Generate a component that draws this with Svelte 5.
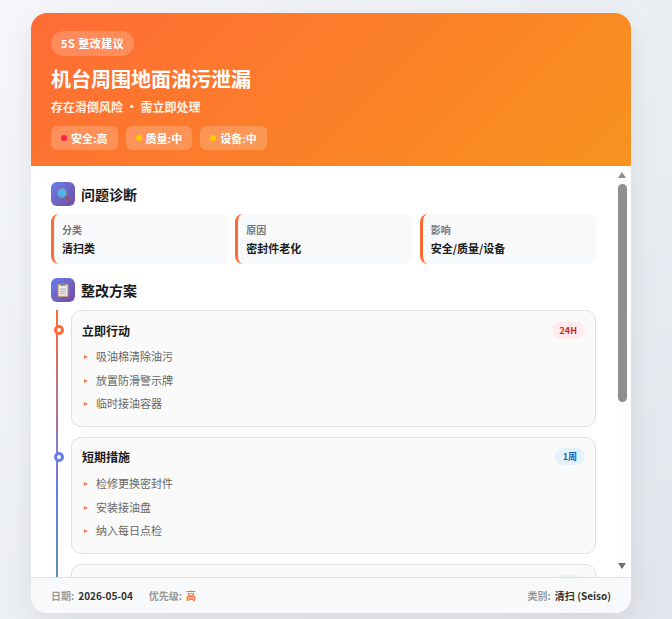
<script lang="ts">
  const diagnosis = [
    { label: '分类', value: '清扫类' },
    { label: '原因', value: '密封件老化' },
    { label: '影响', value: '安全/质量/设备' }
  ];

  const steps = [
    { title: '立即行动', time: '24H', tone: 'red', items: ['吸油棉清除油污', '放置防滑警示牌', '临时接油容器'] },
    { title: '短期措施', time: '1周', tone: 'blue', items: ['检修更换密封件', '安装接油盘', '纳入每日点检'] },
    { title: '长期改善', time: '1月', tone: 'green', items: ['制定预防保养计划', '更新点检标准', '开展员工培训'] }
  ];

  const tags = [
    { label: '安全:高', color: '#ff1f4b' },
    { label: '质量:中', color: '#ffcc00' },
    { label: '设备:中', color: '#ffcc00' }
  ];
</script>

<div class="page">
  <div class="card">
    <header class="header">
      <span class="badge">5S 整改建议</span>
      <h1>机台周围地面油污泄漏</h1>
      <p class="subtitle">存在滑倒风险 · 需立即处理</p>
      <div class="tags">
        {#each tags as t}
          <span class="tag"><i class="dot" style="background: {t.color}"></i>{t.label}</span>
        {/each}
      </div>
    </header>

    <div class="body">
      <div class="content">
        <section class="section">
          <h2 class="section-title">
            <span class="icon">
              <svg width="16" height="16" viewBox="0 0 16 16">
                <path d="M10.5 10.5 L14 14" stroke="#8a5a5a" stroke-width="2.2" stroke-linecap="round" />
                <circle cx="7" cy="7" r="4.6" fill="#4fb4ee" stroke="#7d8aa8" stroke-width="1.1" />
              </svg>
            </span>
            问题诊断
          </h2>
          <div class="diag-grid">
            {#each diagnosis as d}
              <div class="diag-item">
                <div class="diag-label">{d.label}</div>
                <div class="diag-value">{d.value}</div>
              </div>
            {/each}
          </div>
        </section>

        <section class="section">
          <h2 class="section-title">
            <span class="icon">
              <svg width="16" height="16" viewBox="0 0 16 16">
                <rect x="2.5" y="2" width="11" height="13" rx="1" fill="#c49a7c" />
                <rect x="3.7" y="3.2" width="8.6" height="10.6" fill="#eceaea" />
                <rect x="5.5" y="1.5" width="5" height="2.6" rx="0.5" fill="#8d8f9e" />
                <path d="M5 7h6M5 9.2h6M5 11.4h6" stroke="#a9a7b5" stroke-width="0.9" />
              </svg>
            </span>
            整改方案
          </h2>
          <div class="timeline">
            {#each steps as s}
              <div class="step {s.tone}">
                <span class="marker"></span>
                <div class="step-head">
                  <span class="step-title">{s.title}</span>
                  <span class="step-time">{s.time}</span>
                </div>
                <ul>
                  {#each s.items as item}
                    <li>{item}</li>
                  {/each}
                </ul>
              </div>
            {/each}
          </div>
        </section>
      </div>

      <div class="scrollbar">
        <span class="arrow up"></span>
        <span class="thumb"></span>
        <span class="arrow down"></span>
      </div>
    </div>

    <footer class="footer">
      <div class="foot-left">
        <span class="meta"><em>日期:</em><b>2026-05-04</b></span>
        <span class="meta"><em>优先级:</em><b class="high">高</b></span>
      </div>
      <span class="meta"><em>类别:</em><b>清扫 (Seiso)</b></span>
    </footer>
  </div>
</div>

<style>
  :global(body) {
    margin: 0;
    font-family: "Noto Sans CJK SC", sans-serif;
  }
  .page {
    height: 619px;
    box-sizing: border-box;
    padding: 13px 0 0 31px;
    background: linear-gradient(135deg, #f5f7fa 0%, #e2e6ec 100%);
  }
  .card {
    width: 600px;
    height: 600px;
    display: flex;
    flex-direction: column;
    background: #fff;
    border-radius: 16px;
    overflow: hidden;
    box-shadow: 0 8px 32px rgba(0, 0, 0, 0.08);
  }

  .header {
    flex: none;
    height: 153px;
    box-sizing: border-box;
    padding: 18px 20px 0;
    color: #fff;
    background: linear-gradient(135deg, #ff6b35 0%, #f7931e 100%);
  }
  .badge {
    display: block;
    width: fit-content;
    padding: 0 10px;
    height: 25px;
    line-height: 25px;
    font-size: 11px;
    font-weight: 700;
    letter-spacing: 0.5px;
    border-radius: 13px;
    background: rgba(255, 255, 255, 0.2);
  }
  h1 {
    margin: 9px 0 0;
    font-size: 20px;
    line-height: 28px;
    font-weight: 700;
  }
  .subtitle {
    margin: 5px 0 0;
    font-size: 12px;
    line-height: 18px;
    font-weight: 700;
    opacity: 0.9;
  }
  .tags {
    display: flex;
    gap: 8px;
    margin-top: 10px;
  }
  .tag {
    display: flex;
    align-items: center;
    gap: 4px;
    height: 24px;
    padding: 0 10px;
    font-size: 11px;
    font-weight: 700;
    border-radius: 6px;
    background: rgba(255, 255, 255, 0.2);
  }
  .dot {
    width: 6px;
    height: 6px;
    border-radius: 50%;
  }

  .body {
    position: relative;
    flex: 1;
    min-height: 0;
    overflow: hidden;
  }
  .content {
    padding: 16px 35px 0 20px;
  }
  .scrollbar {
    position: absolute;
    top: 0;
    right: 0;
    bottom: 0;
    width: 15px;
    background: #fdfdfd;
  }
  .thumb {
    position: absolute;
    top: 18px;
    left: 2px;
    width: 9px;
    height: 218px;
    border-radius: 5px;
    background: #8f8f8f;
  }
  .arrow {
    position: absolute;
    left: 2px;
    border-left: 4.5px solid transparent;
    border-right: 4.5px solid transparent;
  }
  .arrow.up {
    top: 6px;
    border-bottom: 6px solid #8f8f8f;
  }
  .arrow.down {
    bottom: 8px;
    border-top: 6px solid #6f6f6f;
  }

  .section {
    margin-bottom: 14px;
  }
  .section-title {
    display: flex;
    align-items: center;
    gap: 6px;
    margin: 0 0 8px;
    font-size: 14px;
    line-height: 24px;
    font-weight: 700;
    color: #1a1a1a;
  }
  .icon {
    width: 24px;
    height: 24px;
    display: flex;
    align-items: center;
    justify-content: center;
    border-radius: 6px;
    background: linear-gradient(135deg, #667eea 0%, #764ba2 100%);
  }

  .diag-grid {
    display: grid;
    grid-template-columns: repeat(3, 1fr);
    gap: 8px;
  }
  .diag-item {
    height: 50px;
    box-sizing: border-box;
    padding: 8px 8px;
    background: #f8f9fa;
    border-left: 3px solid #ff6b35;
    border-radius: 8px;
  }
  .diag-label {
    font-size: 10px;
    line-height: 15px;
    font-weight: 700;
    color: #777;
  }
  .diag-value {
    margin-top: 3px;
    font-size: 11px;
    line-height: 16px;
    font-weight: 700;
    color: #1a1a1a;
  }

  .timeline {
    position: relative;
    padding-left: 20px;
  }
  .timeline::before {
    content: '';
    position: absolute;
    left: 5px;
    top: 0;
    bottom: 0;
    width: 2px;
    background: linear-gradient(180deg, #ff6b35 0%, #667eea 50%, #4caf50 100%);
  }
  .step {
    position: relative;
    box-sizing: border-box;
    height: 116.8px;
    margin-bottom: 10px;
    padding: 10px 10px 8px;
    background: #fafafa;
    border: 1px solid #e0e0e0;
    border-radius: 10px;
  }
  .step:last-child {
    margin-bottom: 0;
  }
  .marker {
    position: absolute;
    left: -18px;
    top: 14px;
    width: 4px;
    height: 4px;
    border: 3px solid #ff6b35;
    border-radius: 50%;
    background: #fff;
  }
  .blue .marker {
    border-color: #667eea;
  }
  .green .marker {
    border-color: #4caf50;
  }
  .step-head {
    display: flex;
    align-items: center;
    justify-content: space-between;
    height: 18px;
    margin-bottom: 6px;
  }
  .step-title {
    font-size: 12px;
    font-weight: 700;
    color: #1a1a1a;
  }
  .step-time {
    padding: 0 8px;
    height: 17px;
    line-height: 17px;
    font-size: 9px;
    font-weight: 700;
    border-radius: 9px;
  }
  .red .step-time {
    color: #c62828;
    background: #ffebee;
  }
  .blue .step-time {
    color: #1565c0;
    background: #e3f2fd;
  }
  .green .step-time {
    color: #2e7d32;
    background: #e8f5e9;
  }
  ul {
    margin: 0;
    padding: 0;
    list-style: none;
  }
  li {
    position: relative;
    padding: 4px 0 4px 14px;
    font-size: 11px;
    line-height: 15.7px;
    color: #666;
  }
  li::before {
    content: '';
    position: absolute;
    left: 2px;
    top: 10px;
    border-left: 4px solid #ff7a45;
    border-top: 2px solid transparent;
    border-bottom: 2px solid transparent;
  }

  .footer {
    flex: none;
    height: 36px;
    box-sizing: border-box;
    padding: 0 20px;
    display: flex;
    align-items: center;
    justify-content: space-between;
    font-size: 10px;
    background: #f8f9fa;
    border-top: 1px solid #e0e0e0;
  }
  .foot-left {
    display: flex;
    gap: 16px;
  }
  .meta {
    display: flex;
    gap: 4px;
  }
  .footer em {
    font-style: normal;
    font-weight: 700;
    color: #999;
  }
  .footer b {
    font-weight: 700;
    color: #333;
  }
  .footer b.high {
    color: #ff6b35;
  }
</style>
